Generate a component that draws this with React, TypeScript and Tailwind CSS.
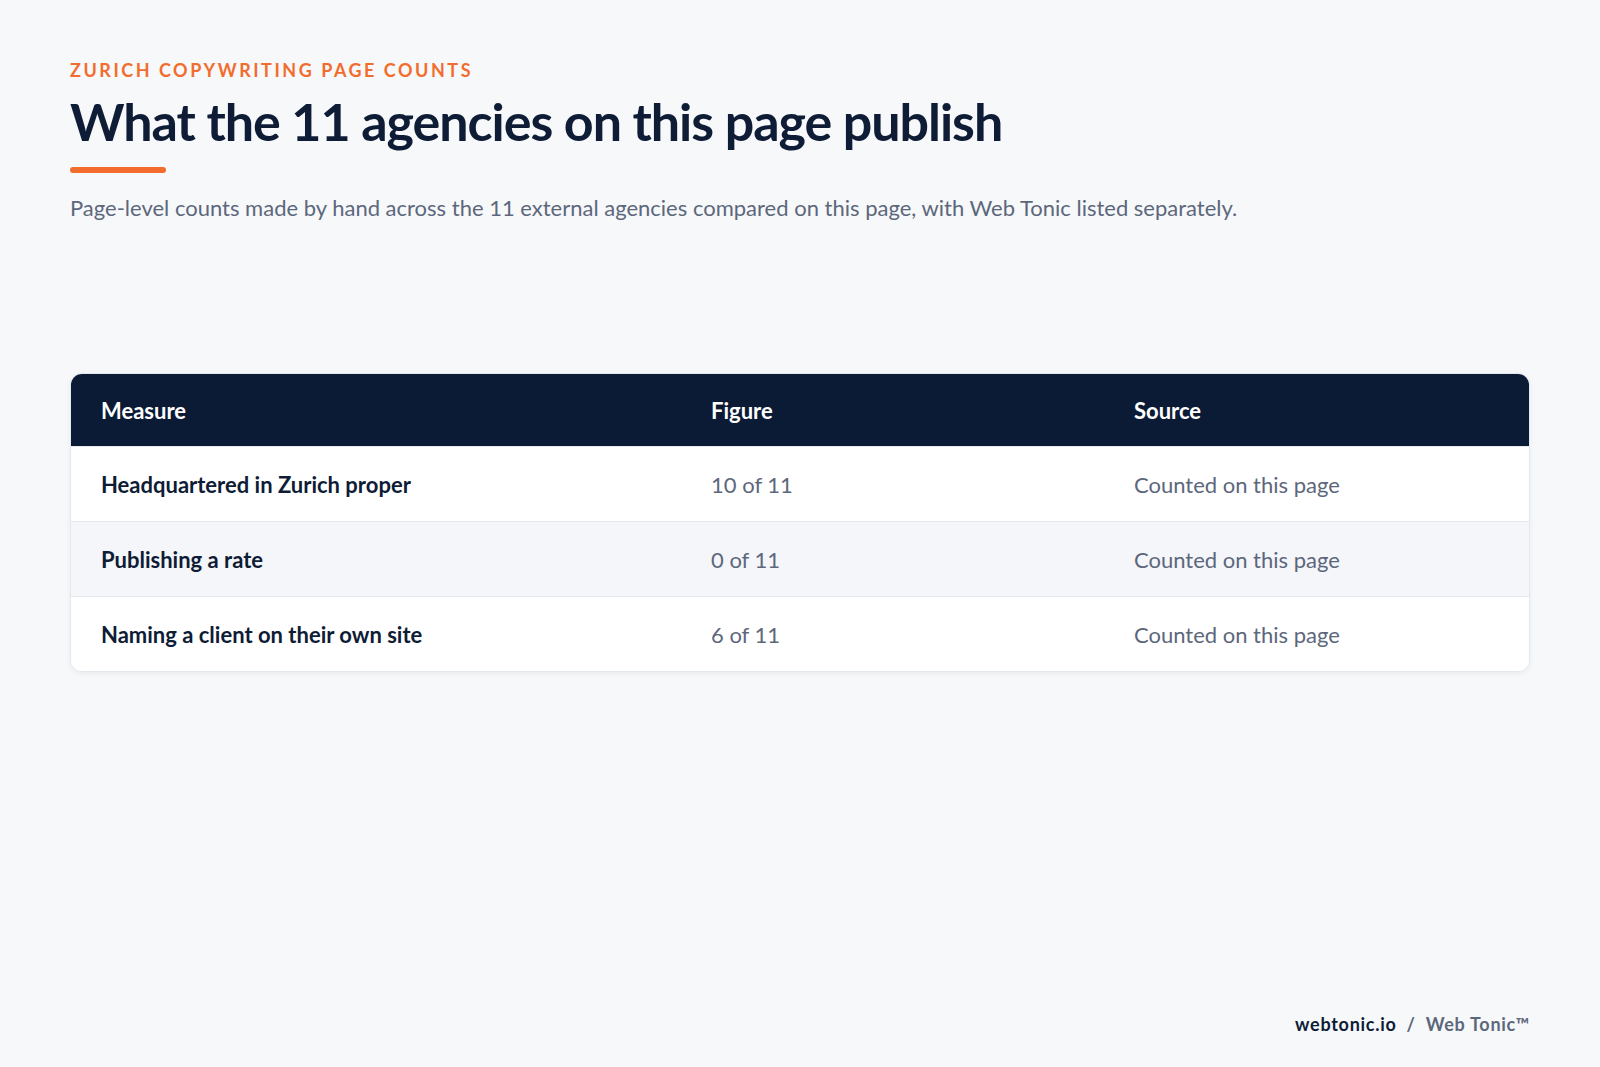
import React from "react";

// ------------------------------------------------------ DATA

type Row = { measure: string; figure: string; source: string };

const rows: Row[] = [
    { measure: "Headquartered in Zurich proper", figure: "10 of 11", source: "Counted on this page" },
    { measure: "Publishing a rate", figure: "0 of 11", source: "Counted on this page" },
    { measure: "Naming a client on their own site", figure: "6 of 11", source: "Counted on this page" },
];

// ------------------------------------------------------ COMPONENTS

// COMPONENT HEADER
function PageHeader() {
    return (
        <div>
            <p className="pt-[61px] text-[18px] leading-none font-bold uppercase tracking-[0.14em] text-[#f26d2d]">
                Zurich copywriting page counts
            </p>
            <h1 className="mt-[16px] text-[52px] leading-none font-bold tracking-[-0.02em] text-[#0e1c36]">
                What the 11 agencies on this page publish
            </h1>
            <div className="mt-[20px] h-[6px] w-[96px] rounded-full bg-[#f26d2d]"></div>
            <p className="mt-[24px] text-[22px] leading-none text-[#5d677c]">
                Page-level counts made by hand across the 11 external agencies compared on this page, with Web Tonic listed separately.
            </p>
        </div>
    );
}

// COMPONENT TABLE
function CountsTable() {
    return (
        <div className="mt-[154px] overflow-hidden rounded-xl border border-[#e3e8ef] bg-white shadow-[0_2px_6px_rgba(15,28,54,0.05)]">
            <div className="grid h-[72px] grid-cols-[610px_423px_1fr] items-center bg-[#0c1b35] text-[22px] font-bold text-white">
                <span className="pl-[30px]">Measure</span>
                <span className="pl-[30px]">Figure</span>
                <span className="pl-[30px]">Source</span>
            </div>
            {rows.map((row, i) => (
                <div
                    key={row.measure}
                    className={`grid h-[75px] grid-cols-[610px_423px_1fr] items-center border-t border-[#e3e8ef] text-[22px] ${i % 2 === 1 ? "bg-[#f4f6f9]" : "bg-white"}`}
                >
                    <span className="pl-[30px] font-bold text-[#0e1c36]">{row.measure}</span>
                    <span className="pl-[30px] text-[#5d677c]">{row.figure}</span>
                    <span className="pl-[30px] text-[#5d677c]">{row.source}</span>
                </div>
            ))}
        </div>
    );
}

// COMPONENT FOOTER
function Footer() {
    return (
        <div className="mt-auto flex justify-end pb-[34px] text-[18px] leading-none font-bold tracking-[0.04em]">
            <span className="text-[#0e1c36]">webtonic.io</span>
            <span className="mx-[10px] text-[#5d677c]">/</span>
            <span className="text-[#5d677c]">Web Tonic™</span>
        </div>
    );
}

export default function App() {
    return (
        <div className="flex min-h-[1067px] flex-col bg-[#f6f8fa] px-[70px] font-['Lato',sans-serif]">
            <PageHeader />
            <CountsTable />
            <Footer />
        </div>
    );
}
